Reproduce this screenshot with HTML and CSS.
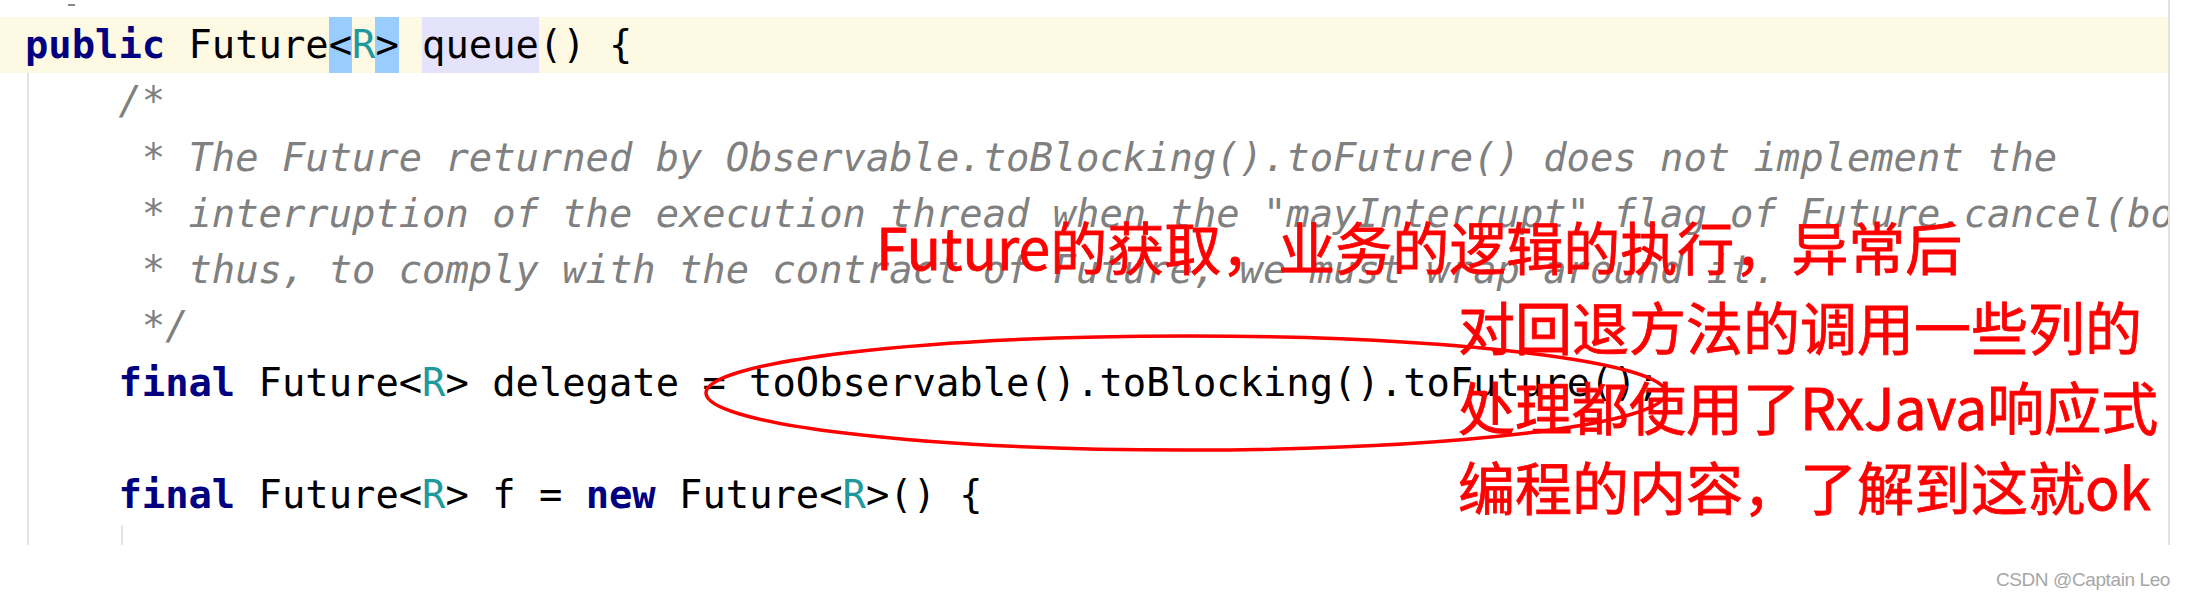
FILE: index.html
```html
<!DOCTYPE html>
<html lang="zh-CN">
<head>
<meta charset="utf-8">
<title>Future queue</title>
<link rel="stylesheet" href="styles.css">
</head>
<body>
<div class="page">
  <div class="editor">
    <div class="prev"><span class="prev-mark"></span></div>
    <div class="line current"><span class="kw">public</span> Future<span class="hl-bracket">&lt;</span><span class="tp">R</span><span class="hl-bracket">&gt;</span> <span class="hl-ident">queue</span>() {</div>
    <div class="body">
      <div class="line cm">    /*</div>
      <div class="line cm">     * The Future returned by Observable.toBlocking().toFuture() does not implement the</div>
      <div class="line cm">     * interruption of the execution thread when the "mayInterrupt" flag of Future.cancel(boolean) is set to true;</div>
      <div class="line cm">     * thus, to comply with the contract of Future, we must wrap around it.</div>
      <div class="line cm">     */</div>
      <div class="line">    <span class="kw">final</span> Future&lt;<span class="tp">R</span>&gt; delegate = toObservable().toBlocking().toFuture();</div>
      <div class="line"> </div>
      <div class="line">    <span class="kw">final</span> Future&lt;<span class="tp">R</span>&gt; f = <span class="kw">new</span> Future&lt;<span class="tp">R</span>&gt;() {</div>
      <div class="line partial"> </div>
    </div>

    <svg class="circle" width="990" height="130" viewBox="0 0 990 130" aria-hidden="true">
      <ellipse cx="486" cy="63" rx="480" ry="57" fill="none" stroke="#ff0000" stroke-width="3.5"/>
    </svg>

    <div class="note">
      <div class="note-line">Future的获取，业务的逻辑的执行，异常后</div>
      <div class="note-rest">
        <div class="note-line">对回退方法的调用一些列的</div>
        <div class="note-line">处理都使用了RxJava响应式</div>
        <div class="note-line">编程的内容，了解到这就ok</div>
      </div>
    </div>
  </div>
  <div class="footer">
    <span class="watermark">CSDN @Captain Leo</span>
  </div>
</div>
</body>
</html>
```
FILE: styles.css
```css
html, body {
  margin: 0;
  padding: 0;
  background: #ffffff;
}

.page {
  width: 2188px;
  height: 610px;
  display: flex;
  flex-direction: column;
}

.editor {
  position: relative;
  width: 2170px;
  height: 545px;
  box-sizing: border-box;
  border-right: 2px solid #e2e2e2;
  overflow: hidden;
  font-family: "DejaVu Sans Mono", monospace;
  font-size: 38.8px;
  color: #000000;
}

.prev {
  height: 17px;
  position: relative;
}

.prev-mark {
  display: block;
  margin-left: 68px;
  padding-top: 4px;
  width: 7px;
  height: 0;
  border-bottom: 2px solid #8a8a8a;
}

.line {
  height: 56.25px;
  line-height: 56.25px;
  white-space: pre;
  padding-left: 25px;
}

.current {
  background: #fef9e2;
}

.body {
  background: linear-gradient(#e4e4e4, #e4e4e4) no-repeat 27px 0 / 2px 100%;
}

.partial {
  background: linear-gradient(#e4e4e4, #e4e4e4) no-repeat 121px 2px / 2px 100%;
}

.kw {
  color: #000080;
  font-weight: bold;
}

.tp {
  color: #20999d;
}

.cm {
  color: #808080;
  font-style: italic;
}

.hl-bracket {
  display: inline-block;
  background: #99ccff;
  line-height: 56.25px;
}

.hl-ident {
  display: inline-block;
  background: #e5e3fb;
  line-height: 56.25px;
}

.circle {
  position: absolute;
  left: 700px;
  top: 330px;
}

.note {
  position: absolute;
  left: 876px;
  top: 205px;
  font-family: "Noto Sans CJK SC", "Noto Sans", sans-serif;
  font-size: 57px;
  line-height: 80px;
  color: #ff0000;
  -webkit-text-stroke: 0.8px #ff0000;
  white-space: nowrap;
}

.note-rest {
  padding-left: 582px;
}

.footer {
  flex: 1;
  display: flex;
  justify-content: flex-end;
  align-items: center;
  padding-right: 18px;
  padding-top: 4px;
}

.watermark {
  font-family: "Liberation Sans", Arial, sans-serif;
  font-size: 19px;
  color: #a6a6a6;
  letter-spacing: -0.4px;
}
```
